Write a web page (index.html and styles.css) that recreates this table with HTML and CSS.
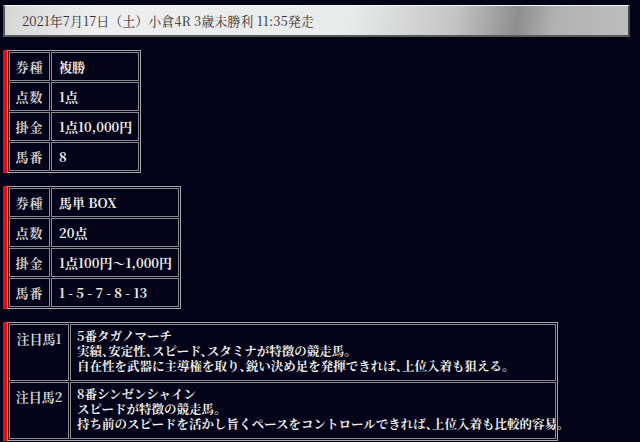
FILE: index.html
```html
<!DOCTYPE html>
<html lang="ja">
<head>
  <meta charset="UTF-8" />
  <title>小倉4R 買い目</title>
  <link rel="stylesheet" href="styles.css">
</head>
<body>
  <div class="race-title">2021年7月17日（土）小倉4R 3歳未勝利 11:35発走</div>

  <div class="bet">
    <table class="bet-table small">
      <tr><th>券種</th><td>複勝</td></tr>
      <tr><th>点数</th><td>1点</td></tr>
      <tr><th>掛金</th><td>1点10,000円</td></tr>
      <tr><th>馬番</th><td>8</td></tr>
    </table>
  </div>

  <div class="bet">
    <table class="bet-table medium">
      <tr><th>券種</th><td>馬単 BOX</td></tr>
      <tr><th>点数</th><td>20点</td></tr>
      <tr><th>掛金</th><td>1点100円～1,000円</td></tr>
      <tr><th>馬番</th><td>1 - 5 - 7 - 8 - 13</td></tr>
    </table>
  </div>

  <!-- 注目馬 -->
  <div class="bet">
    <table class="bet-table notes">
      <tr>
        <th>注目馬1</th>
        <td>5番タガノマーチ<br>実績、安定性、スピード、スタミナが特徴の競走馬。<br>自在性を武器に主導権を取り、鋭い決め足を発揮できれば、上位入着も狙える。</td>
      </tr>
      <tr>
        <th>注目馬2</th>
        <td>8番シンゼンシャイン<br>スピードが特徴の競走馬。<br>持ち前のスピードを活かし旨くペースをコントロールできれば、上位入着も比較的容易。</td>
      </tr>
    </table>
  </div>
</body>
</html>
```

FILE: styles.css
```css
* {
  box-sizing: border-box;
}

body {
  margin: 0;
  padding: 5px 10px 0 3px;
  background: #03041a;
  font-family: "Noto Serif CJK JP", "Liberation Serif", "Noto Sans CJK JP", serif;
  font-size: 13px;
}

.race-title {
  height: 32px;
  line-height: 30px;
  padding-left: 17px;
  color: #333;
  background: linear-gradient(100deg, #d6d6d6 0%, #eeeeee 15%, #e9ebeb 55%, #c4c4c4 72%, #8e8e8e 82%, #b2b2b2 88%, #bdbdbd 100%);
  border-top: 1px solid #f4f4f4;
  border-left: 2px solid #555;
  border-right: 2px solid #444;
  border-bottom: 2px solid #5a5a5a;
}

.bet {
  width: fit-content;
  border-left: 4px solid #f00;
  margin-top: 13px;
}

.bet:first-of-type {
  margin-top: 15px;
}

.bet-table {
  table-layout: fixed;
  border: 1px solid #a9a9a9;
  border-spacing: 1px;
  color: #eee;
  font-weight: bold;
}

.bet-table th,
.bet-table td {
  border: 1px solid #8a8a8a;
  height: 29px;
  padding: 0 7px;
  text-align: left;
  white-space: nowrap;
  text-shadow: 0 0 1px #000;
}

.bet-table th {
  width: 41px;
  padding: 0;
  text-align: center;
  color: #d0d0d0;
  letter-spacing: 1px;
}

.small {
  width: 134px;
}

.medium {
  width: 174px;
}

.notes {
  width: 551px;
}

.notes th,
.notes td {
  height: 57px;
  vertical-align: top;
}

.notes th {
  width: 60px;
  padding-top: 4px;
  letter-spacing: 0;
}

.notes td {
  font-size: 12.5px;
  line-height: 15px;
  padding: 4px 7px 5px 6px;
  font-feature-settings: "halt";
}
```
